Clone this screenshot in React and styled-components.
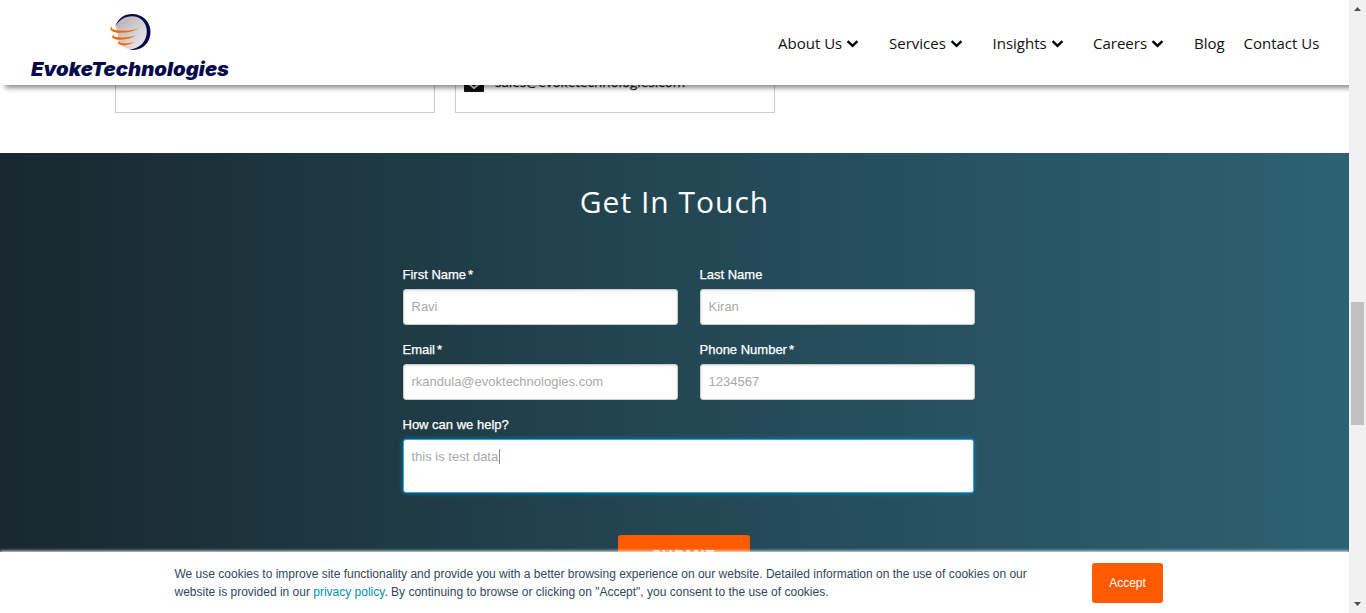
import React from "react";
import styled, { createGlobalStyle, css } from "styled-components";

const GlobalStyle = createGlobalStyle`
  *, *::before, *::after { box-sizing: border-box; }
  body { margin: 0; overflow: hidden; background: #fff; }
`;

const Screen = styled.div`
  display: flex;
  width: 1366px;
  height: 613px;
  overflow: hidden;
  font-family: "Liberation Sans", Arial, sans-serif;
`;

const Page = styled.div`
  width: 1349px;
  display: flex;
  flex-direction: column;
  overflow: hidden;
`;

const Header = styled.header`
  position: relative;
  z-index: 2;
  flex: 0 0 85px;
  display: flex;
  justify-content: space-between;
  background: #fff;
  box-shadow: 5px 3px 5px rgba(0, 0, 0, 0.45);
`;

const Logo = styled.svg`
  display: block;
  width: 240px;
  height: 85px;
`;

const Nav = styled.nav`
  display: flex;
  align-items: flex-start;
  padding: 32px 30px 0 0;
  font: 400 15px/22px "Open Sans", sans-serif;
  color: #111;
`;

const NavItem = styled.a`
  display: flex;
  align-items: center;
  width: ${(p) => p.$width}px;
  white-space: nowrap;

  svg { margin: 2px 0 0 4px; flex: none; }
`;

const Offices = styled.section`
  flex: 0 0 68px;
  display: flex;
  gap: 20px;
  padding-left: 115px;
  background: #fff;
`;

const OfficeCard = styled.div`
  width: 320px;
  height: 28px;
  border: solid #ccc;
  border-width: 0 1px 1px;
`;

const MailRow = styled.div`
  display: flex;
  gap: 11px;
  margin-top: -14px;
  padding-left: 8px;
  font: 400 13.45px/22px "Open Sans", sans-serif;
  -webkit-text-stroke: 0.25px #222;
  color: #222;
`;

const Contact = styled.section`
  flex: none;
  height: 399px;
  min-height: 0;
  display: flex;
  flex-direction: column;
  align-items: center;
  background: linear-gradient(90deg, #18282e 0%, #234753 50%, #2d6174 100%);
`;

const Title = styled.h2`
  margin: 28px 0 0;
  font: 400 30px/42px "Open Sans", sans-serif;
  letter-spacing: 1px;
  color: #fff;
`;

const Form = styled.form`
  width: 572px;
  margin: 41px 0 0 28px;
  display: grid;
  grid-template-columns: 275px 275px;
  column-gap: 22px;
  row-gap: 14px;
`;

const Field = styled.label`
  display: block;
  grid-column: ${(p) => (p.$wide ? "1 / -1" : "auto")};
  font-size: 13px;
  line-height: 20px;
  color: #fff;
`;

const Caption = styled.span`
  display: block;
  height: 25px;
  padding-top: 1px;
  -webkit-text-stroke: 0.25px #fff;
  span { margin-left: 2px; }
`;

const control = css`
  display: block;
  padding: 7px 8px;
  border: 1px solid #ccc;
  border-radius: 3px;
  background: #fff;
  box-shadow: inset 0 1px 3px rgba(0, 0, 0, 0.1);
  font: 13px/20px "Liberation Sans", Arial, sans-serif;
  color: #aaa;
`;

const Input = styled.div`
  ${control}
  width: 275px;
  height: 36px;
`;

const Message = styled.div`
  ${control}
  width: 571px;
  height: 54px;
  border-color: #2ea3dc;
  box-shadow: 0 0 5px rgba(0, 164, 220, 0.6);
`;

const Caret = styled.i`
  display: inline-block;
  width: 1px;
  height: 15px;
  margin-left: 1px;
  vertical-align: -3px;
  background: #888;
`;

const Submit = styled.button`
  flex: none;
  width: 132px;
  height: 40px;
  margin: 42px 0 0 19px;
  padding: 0;
  border: 0;
  border-radius: 3px;
  background: #ff5a00;
  color: #fff;
  font: 600 15px/38px "Open Sans", sans-serif;
  padding-bottom: 2px;
  letter-spacing: 1.2px;
`;

const CookieBar = styled.aside`
  position: relative;
  z-index: 1;
  flex: 0 0 61px;
  display: flex;
  align-items: flex-start;
  padding: 11px 0 0 174.5px;
  background: #fff;
  box-shadow: 0 -1px 3px #eaf0f6;
`;

const CookieText = styled.p`
  width: 917.5px;
  margin: 2px 0 0;
  font-size: 12px;
  line-height: 18px;
  color: #33475b;
  white-space: nowrap;
`;

const CookieLine = styled.span`
  display: block;
  a { color: #0091ae; }
`;

const Accept = styled.button`
  width: 71px;
  height: 40px;
  padding: 0;
  border: 0;
  border-radius: 3px;
  background: #ff5a00;
  color: #fff;
  font: 12px "Liberation Sans", Arial, sans-serif;
`;

const Scrollbar = styled.div`
  flex: 0 0 17px;
  display: flex;
  flex-direction: column;
  align-items: center;
  background: #f1f1f1;
`;

const Arrow = styled.svg`
  flex: none;
  width: 17px;
  height: 17px;
`;

const Thumb = styled.div`
  width: 13px;
  height: 123px;
  margin: 285px 0 171px;
  background: #c1c1c1;
`;

const Chevron = () => (
  <svg width="13" height="12" viewBox="0 0 13 12" fill="none">
    <path d="M1.6 3.2 6.5 7.8 11.4 3.2" stroke="#000" strokeWidth="2.4" />
  </svg>
);

const navItems = [
  { label: "About Us", width: 111, menu: true },
  { label: "Services", width: 103.5, menu: true },
  { label: "Insights", width: 100.5, menu: true },
  { label: "Careers", width: 101, menu: true },
  { label: "Blog", width: 49.5 },
  { label: "Contact Us", width: 75.5 },
];

const fields = [
  { label: "First Name", required: true, value: "Ravi" },
  { label: "Last Name", value: "Kiran" },
  { label: "Email", required: true, value: "rkandula@evoktechnologies.com" },
  { label: "Phone Number", required: true, value: "1234567" },
];

function Brand() {
  return (
    <Logo viewBox="0 0 240 85">
      <defs>
        <linearGradient id="globe" x1="0" y1="0" x2="1" y2="1">
          <stop offset="0" stopColor="#b0abaf" />
          <stop offset="1" stopColor="#f2f1f2" />
        </linearGradient>
      </defs>
      <path d="M116 26C118.5 20 124 15.5 132 15.5C142 15.5 148.5 23 148.5 32C148.5 42 141 49 131 49C125 49 121 46 119 42Z" fill="url(#globe)" />
      <path d="M115 27C117.5 18.5 124.5 14 132 14C143 14 150.5 22 150.5 32C150.5 43.5 141 52 129 49.5C140 49 146.8 41 146.8 31.5C146.8 22.5 140.5 16.3 132 16.3C124.5 16.3 119 20 115 27Z" fill="#050a4c" />
      <g fill="#ff6600">
        <path d="M112.2 26C107.8 29.2 111.8 33 121 32.8C128.5 32.6 134.5 31 139.5 28.2C132 30.6 124.5 31.2 118.5 30.5C112.5 29.8 110.8 28.5 112.2 26Z" />
        <path d="M113.5 34.2C110.2 37.5 113.6 39.9 120.5 39.7C127 39.5 132 38 136.2 35.3C129.8 37.3 124.5 37.8 119.3 37.3C114.7 36.9 112.9 36.3 113.5 34.2Z" />
        <path d="M119 40.8C116.4 43.3 118.8 45.4 124 45.2C128.3 45 132 43.7 134.5 41.7C130.2 43.2 126.2 43.6 122.8 43.2C119.8 42.9 118.5 42.2 119 40.8Z" />
      </g>
      <text x="31" y="76" textLength="198" lengthAdjust="spacingAndGlyphs" fill="#050a4c" fontFamily="Inter, Liberation Sans, sans-serif" fontWeight="900" fontStyle="italic" fontSize="19.3">
        EvokeTechnologies
      </text>
    </Logo>
  );
}

export default function App() {
  return (
    <Screen>
      <GlobalStyle />
      <Page>
        <Header>
          <Brand />
          <Nav>
            {navItems.map((item) => (
              <NavItem key={item.label} $width={item.width}>
                {item.label}
                {item.menu && <Chevron />}
              </NavItem>
            ))}
          </Nav>
        </Header>
        <Offices>
          <OfficeCard />
          <OfficeCard>
            <MailRow>
              <svg width="20" height="22" viewBox="0 0 20 22">
                <rect y="2" width="20" height="19" rx="1" fill="#111" />
                <path d="M5 13l5 4 5-4" fill="none" stroke="#ddd" strokeWidth="1.8" />
              </svg>
              sales@evoketechnologies.com
            </MailRow>
          </OfficeCard>
        </Offices>
        <Contact>
          <Title>Get In Touch</Title>
          <Form>
            {fields.map((f) => (
              <Field key={f.label}>
                <Caption>
                  {f.label}
                  {f.required && <span>*</span>}
                </Caption>
                <Input>{f.value}</Input>
              </Field>
            ))}
            <Field $wide>
              <Caption>How can we help?</Caption>
              <Message>
                this is test data
                <Caret />
              </Message>
            </Field>
          </Form>
          <Submit>SUBMIT</Submit>
        </Contact>
        <CookieBar>
          <CookieText>
            <CookieLine>
              We use cookies to improve site functionality and provide you with a better browsing experience on our website. Detailed information on the use of cookies on our
            </CookieLine>
            <CookieLine>
              website is provided in our <a>privacy policy</a>. By continuing to browse or clicking on "Accept", you consent to the use of cookies.
            </CookieLine>
          </CookieText>
          <Accept>Accept</Accept>
        </CookieBar>
      </Page>
      <Scrollbar>
        <Arrow viewBox="0 0 17 17"><path d="M5 11h7L8.5 7z" fill="#505050" /></Arrow>
        <Thumb />
        <Arrow viewBox="0 0 17 17"><path d="M5 6h7L8.5 10z" fill="#505050" /></Arrow>
      </Scrollbar>
    </Screen>
  );
}
